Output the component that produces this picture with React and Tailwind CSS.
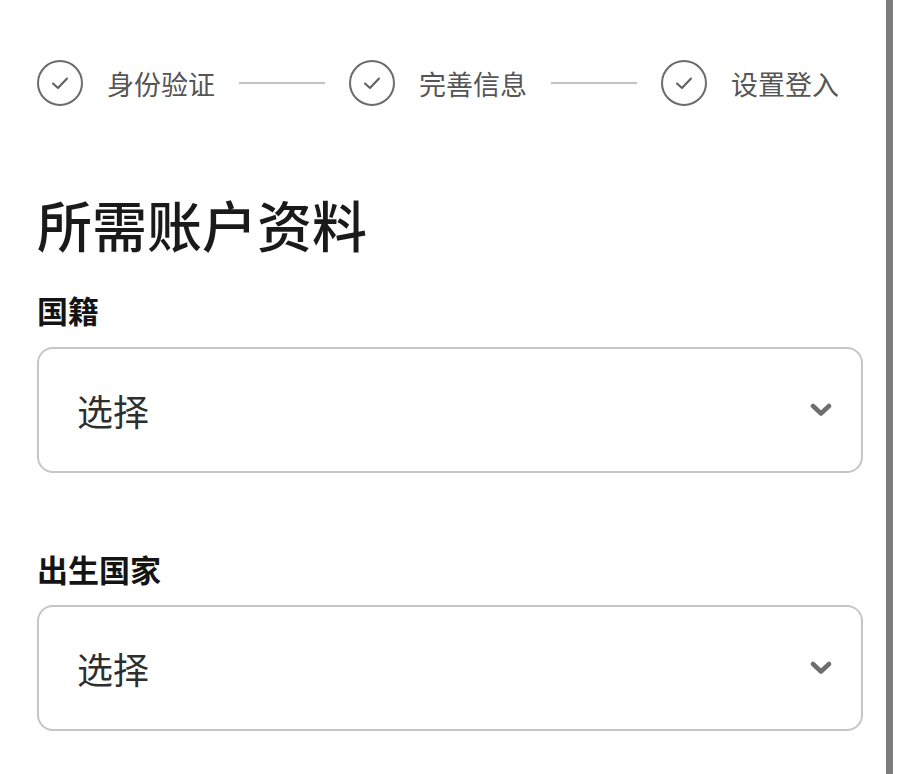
const font = { fontFamily: '"Noto Sans CJK SC", "Noto Sans", sans-serif' }

const steps = ['身份验证', '完善信息', '设置登入']

function CheckCircle() {
  return (
    <div className="w-[46px] h-[46px] rounded-full border-2 border-[#6b6b6b] flex items-center justify-center shrink-0">
      <svg width="22" height="16" viewBox="0 0 22 16" fill="none">
        <path d="M4 8.5 L9 13 L18 3.5" stroke="#5f5f5f" strokeWidth="2" strokeLinecap="round" strokeLinejoin="round" />
      </svg>
    </div>
  )
}

function SelectBox() {
  return (
    <div className="h-[126px] rounded-[16px] border-2 border-[#c6c6c6] flex items-center justify-between pl-[38px] pr-[29px]">
      <span className="text-[36px] leading-none text-[#2e2e2e]">选择</span>
      <svg width="22" height="14" viewBox="0 0 22 14" fill="none">
        <path d="M3 3 L11 10.5 L19 3" stroke="#6e6e6e" strokeWidth="4.5" strokeLinecap="round" strokeLinejoin="round" />
      </svg>
    </div>
  )
}

export default function App() {
  return (
    <div className="w-[900px] h-[774px] bg-white flex overflow-hidden" style={font}>
      <div className="w-[886px] pl-[37px] pr-[23px] pt-[60px]">
        {/* Stepper */}
        <div className="flex items-center gap-[24px] h-[46px]">
          {steps.map((s, i) => (
            <div key={s} className="flex items-center gap-[24px]">
              <CheckCircle />
              <span className="text-[27px] leading-none text-[#555] whitespace-nowrap">{s}</span>
              {i < steps.length - 1 && <div className="w-[86px] h-[2px] bg-[#c2c2c2]" />}
            </div>
          ))}
        </div>

        <h1 className="mt-[89px] text-[55px] leading-[56px] font-medium text-[#1a1a1a]">
          所需账户资料
        </h1>

        <div className="mt-[43px] text-[31px] leading-[31px] font-bold text-[#141414]">国籍</div>
        <div className="mt-[22px]">
          <SelectBox />
        </div>

        <div className="mt-[80px] text-[31px] leading-[31px] font-bold text-[#141414]">出生国家</div>
        <div className="mt-[21px]">
          <SelectBox />
        </div>
      </div>
      <div className="w-[7px] h-full bg-[#7c7c7c]" />
    </div>
  )
}
